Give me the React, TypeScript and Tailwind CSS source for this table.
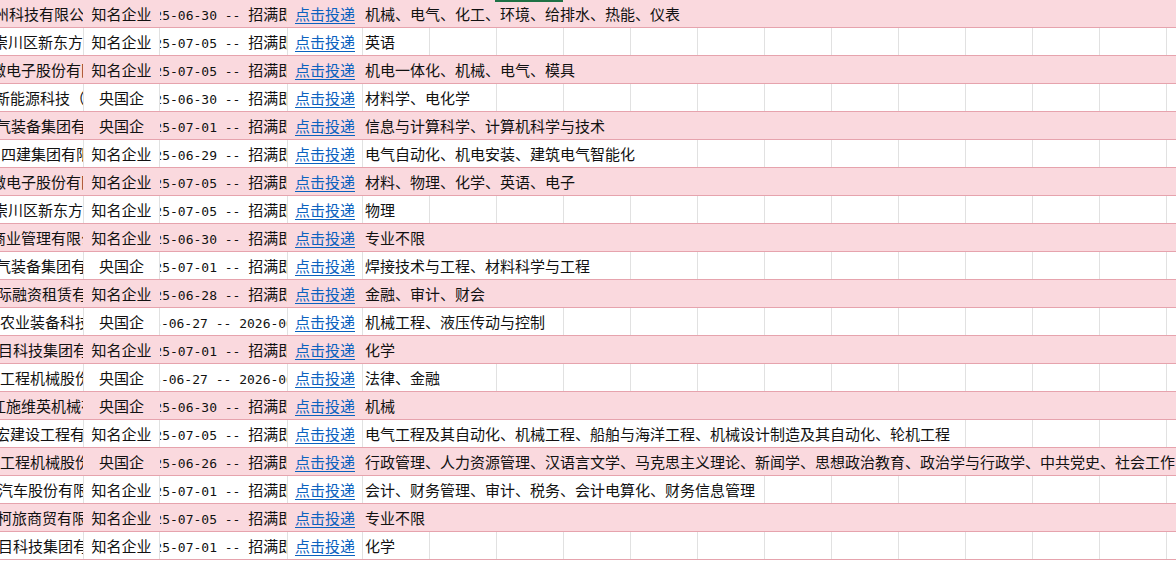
import * as React from 'react';

// Excel 风格的招聘信息表格（横向滚动后的截取视图）

interface JobRow {
  company: string;
  offset: string;
  type: string;
  start: string;
  end: string;
  majors: string;
}

const rows: JobRow[] = [
  { company: '州科技有限公司', offset: '-ml-[6px]', type: '知名企业', start: '2025-06-30', end: '招满即止', majors: '机械、电气、化工、环境、给排水、热能、仪表' },
  { company: '崇川区新东方培训', offset: '-ml-[7px]', type: '知名企业', start: '2025-07-05', end: '招满即止', majors: '英语' },
  { company: '微电子股份有限公司', offset: '-ml-[9px]', type: '知名企业', start: '2025-07-05', end: '招满即止', majors: '机电一体化、机械、电气、模具' },
  { company: '新能源科技（南通）', offset: '-ml-[5px]', type: '央国企', start: '2025-06-30', end: '招满即止', majors: '材料学、电化学' },
  { company: '气装备集团有限公司', offset: '-ml-[4px]', type: '央国企', start: '2025-07-01', end: '招满即止', majors: '信息与计算科学、计算机科学与技术' },
  { company: '四建集团有限公司', offset: 'ml-[1px]', type: '知名企业', start: '2025-06-29', end: '招满即止', majors: '电气自动化、机电安装、建筑电气智能化' },
  { company: '微电子股份有限公司', offset: '-ml-[9px]', type: '知名企业', start: '2025-07-05', end: '招满即止', majors: '材料、物理、化学、英语、电子' },
  { company: '崇川区新东方培训', offset: '-ml-[7px]', type: '知名企业', start: '2025-07-05', end: '招满即止', majors: '物理' },
  { company: '商业管理有限公司', offset: '-ml-[9px]', type: '知名企业', start: '2025-06-30', end: '招满即止', majors: '专业不限' },
  { company: '气装备集团有限公司', offset: '-ml-[4px]', type: '央国企', start: '2025-07-01', end: '招满即止', majors: '焊接技术与工程、材料科学与工程' },
  { company: '际融资租赁有限公司', offset: '-ml-[3px]', type: '知名企业', start: '2025-06-28', end: '招满即止', majors: '金融、审计、财会' },
  { company: '农业装备科技有限', offset: 'ml-0', type: '央国企', start: '2025-06-27', end: '2026-06-27', majors: '机械工程、液压传动与控制' },
  { company: '目科技集团有限公司', offset: '-ml-[2px]', type: '知名企业', start: '2025-07-01', end: '招满即止', majors: '化学' },
  { company: '工程机械股份有限', offset: 'ml-0', type: '央国企', start: '2025-06-27', end: '2026-06-27', majors: '法律、金融' },
  { company: '江施维英机械有限', offset: '-ml-[9px]', type: '央国企', start: '2025-06-30', end: '招满即止', majors: '机械' },
  { company: '宏建设工程有限公司', offset: '-ml-[5px]', type: '知名企业', start: '2025-07-05', end: '招满即止', majors: '电气工程及其自动化、机械工程、船舶与海洋工程、机械设计制造及其自动化、轮机工程' },
  { company: '工程机械股份有限', offset: 'ml-0', type: '央国企', start: '2025-06-26', end: '招满即止', majors: '行政管理、人力资源管理、汉语言文学、马克思主义理论、新闻学、思想政治教育、政治学与行政学、中共党史、社会工作' },
  { company: '汽车股份有限公司', offset: '-ml-[2px]', type: '知名企业', start: '2025-07-01', end: '招满即止', majors: '会计、财务管理、审计、税务、会计电算化、财务信息管理' },
  { company: '柯旅商贸有限公司', offset: '-ml-[3px]', type: '知名企业', start: '2025-07-05', end: '招满即止', majors: '专业不限' },
  { company: '目科技集团有限公司', offset: '-ml-[2px]', type: '知名企业', start: '2025-07-01', end: '招满即止', majors: '化学' },
];

const gridCells = Array.from({ length: 12 }, (_, i) => i);

function SheetRow({ row, pink }: { row: JobRow; pink: boolean }) {
  const line = pink ? 'border-transparent' : 'border-[#e1e1e1]';
  const latinEnd = /^\d/.test(row.end);

  return (
    <div className={`flex h-[28px] border-b border-[#e6a3ad] ${pink ? 'bg-[#fad9de]' : 'bg-white'}`}>
      {/* 公司名称 */}
      <div className={`flex w-[84px] shrink-0 items-center overflow-hidden whitespace-nowrap border-r ${line}`}>
        <span className={`shrink-0 ${row.offset}`}>{row.company}</span>
      </div>

      {/* 企业类型 */}
      <div className={`flex w-[76px] shrink-0 items-center justify-center overflow-hidden whitespace-nowrap border-r ${line}`}>
        {row.type}
      </div>

      {/* 招聘时间 */}
      <div className={`flex w-[128px] shrink-0 items-center justify-center overflow-hidden whitespace-nowrap border-r ${line}`}>
        <span className="shrink-0 whitespace-pre">
          <span className="font-['DejaVu_Sans_Mono',monospace] text-[13px]">{`${row.start} -- `}</span>
          {latinEnd ? (
            <span className="font-['DejaVu_Sans_Mono',monospace] text-[13px]">{row.end}</span>
          ) : (
            <span>{row.end}</span>
          )}
        </span>
      </div>

      {/* 投递链接 */}
      <div className={`flex w-[75px] shrink-0 items-center justify-center overflow-hidden whitespace-nowrap border-r ${line}`}>
        <span className="text-[#0b62bf] underline decoration-1 underline-offset-[3px]">点击投递</span>
      </div>

      {/* 专业要求：文字溢出到右侧空单元格 */}
      <div className="relative flex flex-1">
        {gridCells.map((c) => (
          <div key={c} className={`h-full w-[67px] shrink-0 border-r ${line}`} />
        ))}
        <span
          className={`absolute left-0 top-0 flex h-full items-center whitespace-nowrap pl-[2px] ${
            pink ? 'bg-[#fad9de]' : 'bg-white'
          }`}
        >
          {row.majors}
        </span>
      </div>
    </div>
  );
}

export default function App() {
  return (
    <div className="relative h-[561px] w-[1176px] overflow-hidden bg-white font-['Noto_Sans_CJK_SC',sans-serif] text-[15px] leading-none text-[#111]">
      {rows.map((row, i) => (
        <SheetRow key={i} row={row} pink={i % 2 === 0} />
      ))}
      {/* 选中单元格的绿色边框（上方单元格） */}
      <div className="absolute left-[495px] top-0 h-[2px] w-[68px] bg-[#1e7145]" />
    </div>
  );
}
